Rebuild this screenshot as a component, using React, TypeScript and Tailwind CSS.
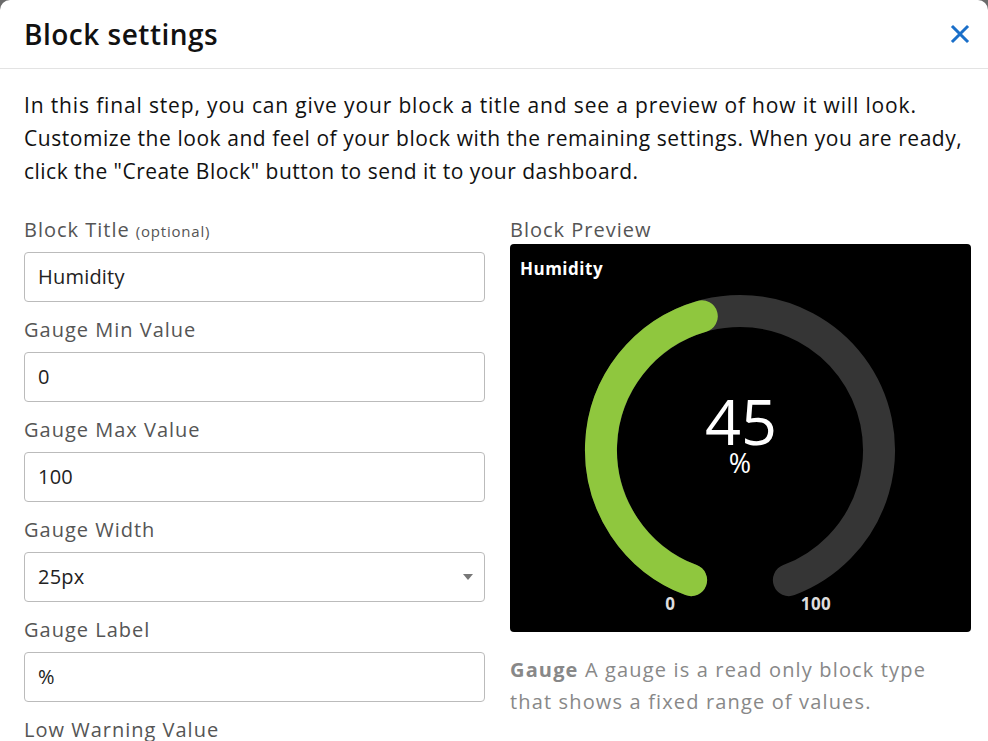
import React from 'react';

const fields = [
  { label: 'Gauge Min Value', value: '0' },
  { label: 'Gauge Max Value', value: '100' },
];

const Field = ({ label, value, select = false, hint }: { label: string; value: string; select?: boolean; hint?: string }) => (
  <div className="mb-[14px]">
    <div className="h-[28px] mb-2 text-[20px] leading-[28px] text-[#555] tracking-[1px] whitespace-nowrap">
      {label}
      {hint && <span className="text-[15px] ml-[6px] tracking-[0.8px]">{hint}</span>}
    </div>
    <div className="h-[50px] rounded-[4px] border border-[#bbb] bg-white flex items-center px-[13px] text-[20px] text-[#222] tracking-[0.2px]">
      <span className="flex-1">{value}</span>
      {select && (
        <span className="w-0 h-0 border-l-[5px] border-r-[5px] border-t-[6px] border-l-transparent border-r-transparent border-t-[#777] mr-[-2px]" />
      )}
    </div>
  </div>
);

const Gauge = () => (
  <svg width="461" height="388" viewBox="0 0 461 388" className="absolute inset-0">
    <path d="M 181.1 336.1 A 139 139 0 1 1 278.9 336.1" fill="none" stroke="#353535" strokeWidth="32" strokeLinecap="round" />
    <path d="M 181.1 336.1 A 139 139 0 0 1 191.8 72.3" fill="none" stroke="#8fc73e" strokeWidth="32" strokeLinecap="round" />
    <text x="231" y="201" textAnchor="middle" fill="#fff" fontSize="63" fontFamily="'Open Sans', sans-serif">45</text>
    <text x="230" y="229" textAnchor="middle" fill="#fff" fontSize="27" fontFamily="'Open Sans', sans-serif">%</text>
    <text x="160" y="366" textAnchor="middle" fill="#ddd" fontSize="17" fontWeight="700" fontFamily="'Open Sans', sans-serif">0</text>
    <text x="306" y="366" textAnchor="middle" fill="#ddd" fontSize="17" fontWeight="700" fontFamily="'Open Sans', sans-serif" letterSpacing="0.5">100</text>
  </svg>
);

export default function App() {
  return (
    <div className="h-[741px] w-[988px] overflow-hidden bg-[#6b6b6b]" style={{ fontFamily: '"Open Sans", Lato, sans-serif' }}>
      <div className="h-full bg-white rounded-t-[10px]">
        <div className="h-[69px] border-b border-[#e3e3e3] flex items-center justify-between pl-6 pr-[18px]">
          <h1 className="text-[28px] font-semibold text-[#111] tracking-[0.5px]">Block settings</h1>
          <svg width="20" height="20" viewBox="0 0 20 20">
            <path d="M3 3 L17 17 M17 3 L3 17" stroke="#1a6fc9" strokeWidth="3" strokeLinecap="square" />
          </svg>
        </div>
        <div className="pl-6 pt-[20px]">
          <p className="text-[21px] leading-[33px] text-[#111] whitespace-nowrap">
            <span className="tracking-[0.85px]">In this final step, you can give your block a title and see a preview of how it will look.</span>
            <br />
            <span className="tracking-[0.55px]">Customize the look and feel of your block with the remaining settings. When you are ready,</span>
            <br />
            <span className="tracking-[0.48px]">click the "Create Block" button to send it to your dashboard.</span>
          </p>
          <div className="mt-[28px] grid grid-cols-[461px_461px] gap-[25px]">
            <div>
              <Field label="Block Title" hint="(optional)" value="Humidity" />
              {fields.map((f) => (
                <Field key={f.label} label={f.label} value={f.value} />
              ))}
              <Field label="Gauge Width" value="25px" select />
              <Field label="Gauge Label" value="%" />
              <Field label="Low Warning Value" value="" />
            </div>
            <div>
              <div className="h-[28px] text-[20px] leading-[28px] text-[#555] tracking-[1px]">Block Preview</div>
              <div className="relative h-[388px] bg-black rounded-[4px] overflow-hidden">
                <Gauge />
                <div className="relative pl-[10px] pt-[12px] text-[17px] font-bold text-white tracking-[0.5px]">Humidity</div>
              </div>
              <p className="mt-[22px] text-[20px] leading-[32px] text-[#888] tracking-[1.15px] whitespace-nowrap">
                <span className="font-bold">Gauge</span> A gauge is a read only block type
                <br />
                that shows a fixed range of values.
              </p>
            </div>
          </div>
        </div>
      </div>
    </div>
  );
}
